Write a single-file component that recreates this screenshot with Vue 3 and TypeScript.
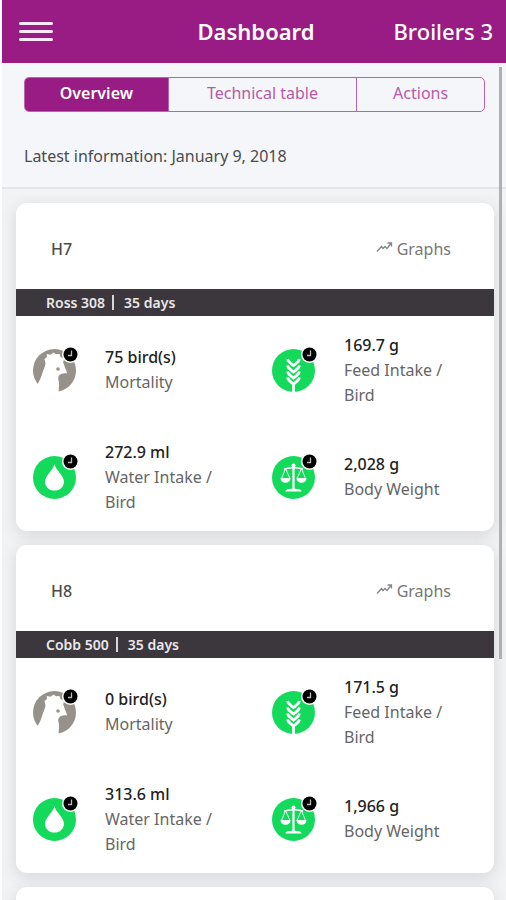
<script setup lang="ts">
import { ref } from 'vue'

type IconName = 'bird' | 'wheat' | 'drop' | 'scale'

interface Metric {
  icon: IconName
  value: string
  label: string
}

interface House {
  name: string
  breed: string
  age: string
  metrics: Metric[]
}

const tabs = ['Overview', 'Technical table', 'Actions']
const activeTab = ref('Overview')

function metrics(mortality: string, feed: string, water: string, weight: string): Metric[] {
  return [
    { icon: 'bird', value: mortality, label: 'Mortality' },
    { icon: 'wheat', value: feed, label: 'Feed Intake / Bird' },
    { icon: 'drop', value: water, label: 'Water Intake / Bird' },
    { icon: 'scale', value: weight, label: 'Body Weight' },
  ]
}

const houses: House[] = [
  { name: 'H7', breed: 'Ross 308', age: '35 days', metrics: metrics('75 bird(s)', '169.7 g', '272.9 ml', '2,028 g') },
  { name: 'H8', breed: 'Cobb 500', age: '35 days', metrics: metrics('0 bird(s)', '171.5 g', '313.6 ml', '1,966 g') },
]
</script>

<template>
  <div class="screen">
    <header class="topbar">
      <button class="menu" type="button" aria-label="Menu">
        <svg width="34" height="22" viewBox="0 0 34 22" aria-hidden="true">
          <path d="M1.5 2.5h31M1.5 10.5h31M1.5 18.5h31" stroke="#fde9fa" stroke-width="3" stroke-linecap="round" />
        </svg>
      </button>
      <h1 class="title">Dashboard</h1>
      <span class="farm">Broilers 3</span>
    </header>

    <main class="content">
      <section class="intro">
        <nav class="tabs">
          <button
            v-for="tab in tabs"
            :key="tab"
            type="button"
            class="tab"
            :class="{ active: tab === activeTab }"
            @click="activeTab = tab"
          >{{ tab }}</button>
        </nav>
        <p class="latest">Latest information: January 9, 2018</p>
      </section>

      <div class="cards">
        <article v-for="house in houses" :key="house.name" class="card">
          <div class="card-head">
            <h2 class="house">{{ house.name }}</h2>
            <a class="graphs" href="#">
              <svg width="17" height="12" viewBox="0 0 17 12" fill="none" stroke="#858585" stroke-width="1.3" aria-hidden="true">
                <path d="M1 10.500 5.500 5.500 7 7.500 9 5.500 11 7.500 15 2.500M11.500 2H15.500V5.500" />
              </svg>
              <span>Graphs</span>
            </a>
          </div>
          <div class="breed">
            <span>{{ house.breed }}</span><span class="bar"></span><span>{{ house.age }}</span>
          </div>
          <div class="metrics">
            <div v-for="m in house.metrics" :key="m.label" class="metric">
              <div class="icon">
                <svg width="43" height="43" viewBox="0 0 43 43" aria-hidden="true">
                  <template v-if="m.icon === 'bird'">
                    <circle cx="21.500" cy="21.500" r="21.500" fill="#96918b" />
                    <path
                      d="M3 37.500C6 33 8 29 9.200 24.500 10.500 20.500 12 17.500 12.500 14.500L11.500 10l2.500-2-.3-3 3.800.7L20.500 3.500l2.500 1.800 3.500-.3 1 3L31 10l-.8 3.500 1.300 3.500c.2 2.500 2.800 4.500 2.300 7.500-2.800-.8-5.500.1-7.300 1.500C24.800 28 25.200 30 25.800 32.500c.6 3-.2 6-.1 11H4z"
                      fill="#fff"
                    />
                    <circle cx="25" cy="20" r="1.800" fill="#96918b" />
                  </template>
                  <circle v-else cx="21.500" cy="21.500" r="21.500" fill="#14da5c" />
                  <path
                    v-if="m.icon === 'wheat'"
                    d="M21.500 33v10M15.500 10c.5 3 3 4 6 6.500 3-2.500 5.500-3.500 6-6.500M15.500 16.500c.5 3 3 4 6 6.500 3-2.500 5.500-3.500 6-6.500M15.500 22.500c.5 3 3 4 6 6.500 3-2.500 5.500-3.500 6-6.500M15.500 28.500c.5 3 3 4 6 6.500 3-2.500 5.500-3.500 6-6.500"
                    fill="none"
                    stroke="#fff"
                    stroke-width="2.800"
                  />
                  <path
                    v-if="m.icon === 'drop'"
                    d="M21.500 8C20.500 14 12 19.500 12 25.700c0 5 4.200 8.900 9.500 8.900s9.500-3.900 9.500-8.900C31 19.500 22.500 14 21.500 8z"
                    fill="#fff"
                  />
                  <g v-if="m.icon === 'scale'">
                    <path d="M21.500 10v24" stroke="#fff" stroke-width="2.200" />
                    <circle cx="21.500" cy="9.500" r="2" fill="#fff" />
                    <path d="M12 13c4-.3 6-2 9.500-1 3.500-1 5.500.7 9.500 1" stroke="#fff" stroke-width="1.600" fill="none" />
                    <path d="m13.500 12.500-4 10M13.500 12.500l4.500 10M29.500 12.500l-4.500 10M29.500 12.500l4 10" stroke="#fff" stroke-width=".9" />
                    <path d="M8.500 22h10c0 3-2 4.800-5 4.800S8.500 25 8.500 22zM24.500 22h10c0 3-2 4.800-5 4.800s-5-1.800-5-4.800zM13.500 35.500c0-2 3-2.700 8-2.700s8 .7 8 2.700z" fill="#fff" />
                  </g>
                </svg>
                <svg class="clock" width="17" height="17" viewBox="0 0 17 17" aria-hidden="true">
                  <circle cx="8.500" cy="8.500" r="8.500" fill="#fff" />
                  <circle cx="8.500" cy="8.500" r="7" fill="#000" />
                  <path d="M9.500 4.500v5H6" fill="none" stroke="#bbb" stroke-width="1.300" />
                </svg>
              </div>
              <div class="text">
                <strong class="value">{{ m.value }}</strong>
                <span class="label">{{ m.label }}</span>
              </div>
            </div>
          </div>
        </article>
        <article class="card next"></article>
      </div>
      <div class="scrollbar"></div>
    </main>
  </div>
</template>

<style>
body {
  background: #fff;
}
</style>

<style scoped>
.screen {
  box-sizing: border-box;
  height: 100vh;
  padding-left: 2px;
  display: flex;
  flex-direction: column;
  overflow: hidden;
  font-family: "Noto Sans", "Open Sans", sans-serif;
  font-size: 16px;
  color: #4c4c4c;
}
.topbar {
  flex: none;
  height: 63px;
  padding: 0 13px 2px 17px;
  box-sizing: border-box;
  display: grid;
  grid-template-columns: 1fr auto 1fr;
  align-items: center;
  background: #991c84;
  color: #fff;
}
.menu {
  justify-self: start;
  display: flex;
  padding: 2px 0 0;
  border: 0;
  background: none;
}
.title,
.farm {
  margin: 0;
  font-size: 22px;
  line-height: 30px;
  font-weight: 600;
}
.farm {
  justify-self: end;
  font-weight: 500;
}
.content {
  position: relative;
  flex: 1;
  min-height: 0;
  display: flex;
  flex-direction: column;
  overflow: hidden;
  background: #f1f3f4;
}
.intro {
  flex: none;
  padding: 14px 21px 19px 22px;
  background: #f5f6fa;
  border-bottom: 2px solid #e2e4e7;
}
.tabs {
  display: grid;
  grid-template-columns: 143fr 189fr 128fr;
  box-sizing: border-box;
  height: 35px;
  border: 1px solid #b965ab;
  border-radius: 5px;
  overflow: hidden;
}
.tab {
  padding: 0 0 3px;
  border: 0;
  border-left: 1px solid #b965ab;
  background: none;
  color: #b75aa8;
  font: inherit;
}
.tab:first-child {
  border-left: 0;
}
.tab.active {
  background: #991c84;
  color: #fff;
  font-weight: 600;
}
.latest {
  margin: 32px 0 0;
  font-size: 16px;
  line-height: 24px;
}
.cards {
  display: flex;
  flex-direction: column;
  gap: 14px;
  padding: 14px 12px 0 14px;
}
.card {
  flex: none;
  border-radius: 11px;
  background: #fff;
  box-shadow: 0 4px 16px rgba(60, 70, 75, 0.16);
}
.next {
  height: 328px;
}
.card-head {
  display: flex;
  align-items: center;
  justify-content: space-between;
  height: 86px;
  padding: 6px 43px 0 35px;
  box-sizing: border-box;
}
.house {
  margin: 0;
  font-size: 16px;
  font-weight: 500;
}
.graphs {
  display: flex;
  align-items: center;
  gap: 4px;
  color: #777;
  text-decoration: none;
}
.graphs svg {
  margin-bottom: 4px;
}
.breed {
  display: flex;
  align-items: center;
  height: 27px;
  padding-left: 30px;
  background: #3c373c;
  color: #e9e7e9;
  font-size: 14px;
  font-weight: 600;
}
.bar {
  width: 2px;
  height: 15px;
  margin: 0 10px 0 7px;
  background: #d8d5d8;
}
.metrics {
  display: grid;
  grid-template-columns: 1fr 1fr;
  grid-auto-rows: 107px;
  padding-bottom: 1px;
}
.metric {
  display: flex;
  align-items: center;
  gap: 29px;
  padding: 1px 20px 0 17px;
}
.icon {
  position: relative;
  flex: none;
  display: flex;
}
.clock {
  position: absolute;
  top: -3px;
  right: -3px;
}
.text {
  display: flex;
  flex-direction: column;
  line-height: 25px;
}
.value {
  color: #222;
  font-weight: 500;
}
.label {
  color: #666;
}
.scrollbar {
  position: absolute;
  top: 4px;
  right: 4px;
  width: 3px;
  height: 592px;
  background: #aeb0b3;
}
</style>
